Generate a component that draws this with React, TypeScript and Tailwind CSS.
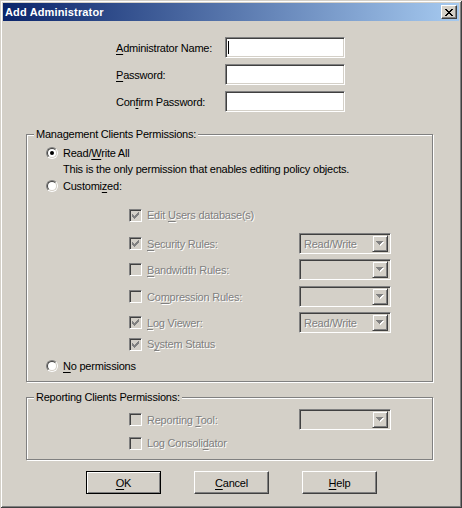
import React from "react";

const dis = "text-[#808080] [text-shadow:1px_1px_0_#fff]";
const sunken =
  "border border-t-[#808080] border-l-[#808080] border-r-white border-b-white shadow-[inset_1px_1px_0_#404040,inset_-1px_-1px_0_#d4d0c8]";
const raised =
  "border border-t-white border-l-white border-r-[#404040] border-b-[#404040] shadow-[inset_-1px_-1px_0_#808080]";

function U({ children }: { children: React.ReactNode }) {
  return <span className="underline decoration-1 underline-offset-[2px]">{children}</span>;
}

function Check({ checked }: { checked?: boolean }) {
  return (
    <div className={`w-[13px] h-[13px] shrink-0 bg-[#d4d0c8] flex items-center justify-center ${sunken}`}>
      {checked && (
        <svg width="7" height="7" viewBox="0 0 7 7" shapeRendering="crispEdges" fill="#808080">
          <rect x="6" y="0" width="1" height="1" />
          <rect x="5" y="1" width="2" height="1" />
          <rect x="0" y="2" width="1" height="1" />
          <rect x="4" y="2" width="3" height="1" />
          <rect x="0" y="3" width="2" height="1" />
          <rect x="3" y="3" width="3" height="1" />
          <rect x="0" y="4" width="5" height="1" />
          <rect x="1" y="5" width="3" height="1" />
          <rect x="2" y="6" width="1" height="1" />
        </svg>
      )}
    </div>
  );
}

function Radio({ checked }: { checked?: boolean }) {
  return (
    <div className="w-[12px] h-[12px] shrink-0 rounded-full border border-t-[#808080] border-l-[#808080] border-r-white border-b-white">
      <div className="w-full h-full rounded-full border border-t-[#404040] border-l-[#404040] border-r-[#d4d0c8] border-b-[#d4d0c8] bg-white flex items-center justify-center">
        {checked && <div className="w-[4px] h-[4px] rounded-full bg-black" />}
      </div>
    </div>
  );
}

function Arrow() {
  return (
    <svg width="8" height="5" viewBox="0 0 8 5" shapeRendering="crispEdges">
      <g fill="#fff" transform="translate(1 1)">
        <rect x="0" y="0" width="7" height="1" />
        <rect x="1" y="1" width="5" height="1" />
        <rect x="2" y="2" width="3" height="1" />
        <rect x="3" y="3" width="1" height="1" />
      </g>
      <g fill="#808080">
        <rect x="0" y="0" width="7" height="1" />
        <rect x="1" y="1" width="5" height="1" />
        <rect x="2" y="2" width="3" height="1" />
        <rect x="3" y="3" width="1" height="1" />
      </g>
    </svg>
  );
}

function Combo({ value }: { value?: string }) {
  return (
    <div className={`w-[92px] h-[21px] shrink-0 bg-[#d4d0c8] flex items-center p-[2px] ${sunken}`}>
      <span className={`flex-1 pl-[2px] ${dis}`}>{value}</span>
      <div className="w-[16px] h-[17px] flex items-center justify-center border border-t-[#d4d0c8] border-l-[#d4d0c8] border-r-[#404040] border-b-[#404040] shadow-[inset_1px_1px_0_#fff,inset_-1px_-1px_0_#808080]">
        <Arrow />
      </div>
    </div>
  );
}

function Group({ title, className, children }: { title: string; className: string; children: React.ReactNode }) {
  return (
    <div className={`relative ml-[23px] w-[407px] border border-[#808080] shadow-[inset_1px_1px_0_#fff,1px_1px_0_#fff] flex flex-col ${className}`}>
      <span className="absolute left-[7px] -top-[8px] px-[2px] leading-[14px] bg-[#d4d0c8]">{title}</span>
      {children}
    </div>
  );
}

function Row({ checked, label, combo, hasCombo, className = "" }: {
  checked?: boolean; label: React.ReactNode; combo?: string; hasCombo?: boolean; className?: string;
}) {
  return (
    <div className={`flex items-center pl-[102px] ${hasCombo ? "h-[21px]" : "h-[16px]"} ${className}`}>
      <Check checked={checked} />
      <span className={`ml-[5px] w-[152px] ${dis}`}>{label}</span>
      {hasCombo && <Combo value={combo} />}
    </div>
  );
}

export default function App() {
  const fields = [
    { label: <><U>A</U>dministrator Name:</>, caret: true },
    { label: <><U>P</U>assword:</> },
    { label: <>Con<U>f</U>irm Password:</> },
  ];

  return (
    <div className="w-[462px] h-[508px] overflow-hidden bg-[#d4d0c8] p-[3px] shadow-[inset_1px_1px_0_#d4d0c8,inset_-1px_-1px_0_#404040,inset_2px_2px_0_#fff,inset_-2px_-2px_0_#808080] font-['Liberation_Sans',Arial,sans-serif] text-[11px] leading-[14px] tracking-[-0.22px] text-black">
      {/* Title bar */}
      <div className="h-[18px] flex items-center justify-between pl-[2px] pr-[2px] bg-[linear-gradient(to_right,#0a246a,#a6caf0)]">
        <span className="text-white font-bold tracking-[0.15px]">Add Administrator</span>
        <div className={`w-[16px] h-[14px] bg-[#d4d0c8] flex items-center justify-center ${raised}`}>
          <svg width="8" height="7" viewBox="0 0 8 7" shapeRendering="crispEdges" fill="#000">
            <rect x="0" y="0" width="2" height="1" />
            <rect x="6" y="0" width="2" height="1" />
            <rect x="1" y="1" width="2" height="1" />
            <rect x="5" y="1" width="2" height="1" />
            <rect x="2" y="2" width="4" height="1" />
            <rect x="3" y="3" width="2" height="1" />
            <rect x="2" y="4" width="4" height="1" />
            <rect x="1" y="5" width="2" height="1" />
            <rect x="5" y="5" width="2" height="1" />
            <rect x="0" y="6" width="2" height="1" />
            <rect x="6" y="6" width="2" height="1" />
          </svg>
        </div>
      </div>

      {/* Name / password fields */}
      <div className="mt-[16px] flex flex-col gap-[6px] pl-[113px]">
        {fields.map((f, i) => (
          <div key={i} className="flex items-center h-[21px]">
            <span className="w-[109px]">{f.label}</span>
            <div className={`w-[120px] h-[21px] bg-white flex items-center ${sunken}`}>
              {f.caret && <div className="ml-[2px] w-px h-[13px] bg-black" />}
            </div>
          </div>
        ))}
      </div>

      {/* Management clients */}
      <Group title="Management Clients Permissions:" className="mt-[22px] pb-[7px]">
        <div className="mt-[10px] h-[16px] flex items-center pl-[19px]">
          <Radio checked />
          <span className="ml-[5px]">Read/<U>W</U>rite All</span>
        </div>
        <div className="h-[16px] flex items-center pl-[36px]">
          This is the only permission that enables editing policy objects.
        </div>
        <div className="mt-[1px] h-[16px] flex items-center pl-[19px]">
          <Radio />
          <span className="ml-[5px]">Customi<U>z</U>ed:</span>
        </div>
        <Row className="mt-[13px]" checked label={<>Edit <U>U</U>sers database(s)</>} />
        <Row className="mt-[10px]" checked hasCombo combo="Read/Write" label={<><U>S</U>ecurity Rules:</>} />
        <Row className="mt-[5px]" hasCombo label={<><U>B</U>andwidth Rules:</>} />
        <Row className="mt-[6px]" hasCombo label={<>Co<U>m</U>pression Rules:</>} />
        <Row className="mt-[5px]" checked hasCombo combo="Read/Write" label={<><U>L</U>og Viewer:</>} />
        <Row className="mt-[3px]" checked label={<>S<U>y</U>stem Status</>} />
        <div className="mt-[6px] h-[16px] flex items-center pl-[19px]">
          <Radio />
          <span className="ml-[5px]"><U>N</U>o permissions</span>
        </div>
      </Group>

      {/* Reporting clients */}
      <Group title="Reporting Clients Permissions:" className="mt-[15px] pb-[8px]">
        <Row className="mt-[11px]" hasCombo label={<>Reporting <U>T</U>ool:</>} />
        <Row className="mt-[5px]" label={<>Log Consoli<U>d</U>ator</>} />
      </Group>

      {/* Buttons */}
      <div className="mt-[11px] flex gap-[33px] pl-[83px]">
        <div className="w-[75px] h-[23px] flex items-center justify-center border border-black shadow-[inset_1px_1px_0_#fff,inset_-1px_-1px_0_#808080]">
          <span><U>O</U>K</span>
        </div>
        <div className={`w-[75px] h-[23px] flex items-center justify-center ${raised}`}>
          <span><U>C</U>ancel</span>
        </div>
        <div className={`w-[75px] h-[23px] flex items-center justify-center ${raised}`}>
          <span><U>H</U>elp</span>
        </div>
      </div>
    </div>
  );
}
